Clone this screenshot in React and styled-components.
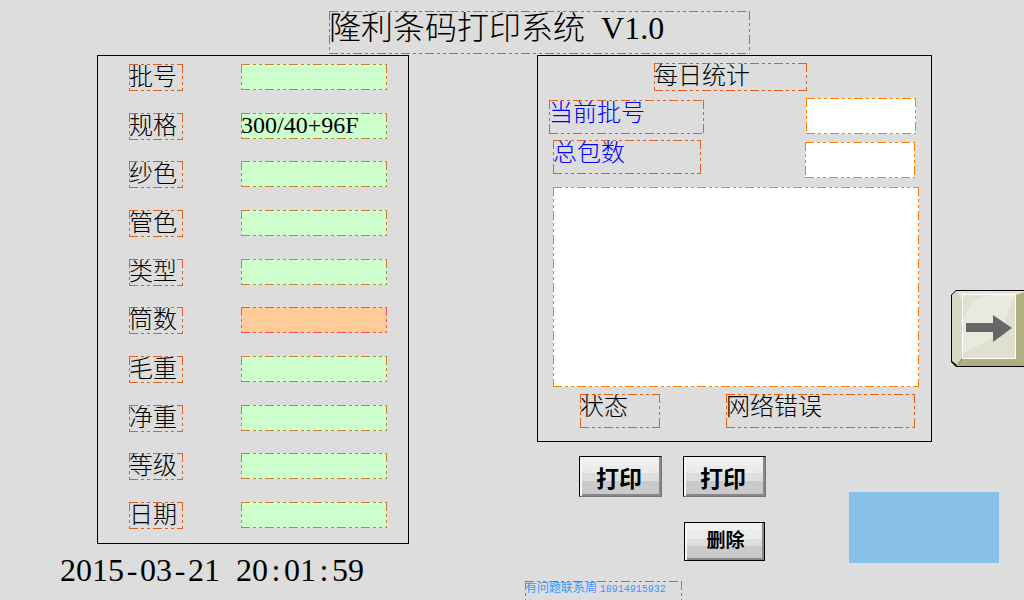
import React from 'react';
import styled, { createGlobalStyle, css } from 'styled-components';

const Global = createGlobalStyle`
  * { box-sizing: border-box; }
  body {
    margin: 0;
    background: #dddddd;
    color: #000;
    font-family: "Liberation Serif", "Noto Sans CJK SC", serif;
    font-size: 24px;
    font-weight: 300;
    line-height: 24px;
  }
`;

const dash = (dir, c) => `linear-gradient(to ${dir}, ${c} 0 9px, transparent 9px 12px, ${c} 12px 15px, transparent 15px 18px, ${c} 18px 21px, transparent 21px 24px)`;

const dashed = css`
  background:
    ${p => dash('right', p.$line || '#e06020')} 0 0 / 24px 1px repeat-x,
    ${p => dash('right', p.$line || '#e06020')} 0 100% / 24px 1px repeat-x,
    ${p => dash('bottom', p.$line || '#e06020')} 0 0 / 1px 24px repeat-y,
    ${p => dash('bottom', p.$line || '#e06020')} 100% 0 / 1px 24px repeat-y,
    ${p => p.$fill || 'transparent'};
`;

const Screen = styled.main`
  display: flex;
  flex-direction: column;
  height: 100vh;
  padding-top: 11px;
  overflow: hidden;
`;

const Title = styled.h1`
  ${dashed}
  width: 421px;
  flex: none;
  height: 43px;
  margin: 0 0 1px 329px;
  padding: 1px 0;
  font-size: 32px;
  font-weight: 300;
  line-height: 32px;
  white-space: nowrap;
`;

const Version = styled.span`
  margin-left: 8px;
`;

const Columns = styled.div`
  display: flex;
  flex: none;
  align-items: flex-start;
`;

const Left = styled.div`
  width: 409px;
  flex: none;
`;

const Form = styled.form`
  display: flex;
  flex-direction: column;
  justify-content: space-between;
  height: 489px;
  margin-left: 97px;
  padding: 8px 21px 14px 31px;
  border: 1px solid #000;
`;

const Row = styled.div`
  display: flex;
  justify-content: space-between;
  align-items: flex-start;
`;

const Label = styled.label`
  ${dashed}
  width: ${p => p.$w || 54}px;
  height: ${p => p.$h || 27}px;
  padding-top: 1px;
  color: ${p => p.$color || '#000'};
  white-space: nowrap;
`;

const Field = styled.input`
  ${dashed}
  width: ${p => p.$w || 146}px;
  height: ${p => p.$h || 26}px;
  padding: 0;
  border: 0;
  border-radius: 0;
  outline: 0;
  color: #000;
  font: inherit;
`;

const Clock = styled.time`
  display: block;
  margin: 10px 0 0 60px;
  font-size: 32px;
  line-height: 32px;
  white-space: nowrap;
`;

const Half = styled.span`
  display: inline-block;
  width: 16px;
  text-align: center;
  white-space: pre;
`;

const Right = styled.div`
  display: flex;
  flex-direction: column;
  width: 395px;
  flex: none;
  margin-left: 128px;
`;

const Stats = styled.section`
  display: flex;
  flex-direction: column;
  height: 387px;
  padding: 7px 12px 0 11px;
  border: 1px solid #000;
`;

const Heading = styled.h2`
  ${dashed}
  width: 153px;
  height: 28px;
  margin: 0 0 7px 105px;
  padding-top: 1px;
  font-size: 24px;
  font-weight: 300;
  line-height: 24px;
`;

const BatchRow = styled(Row)`
  align-items: flex-end;
  padding-right: 3px;
  margin-bottom: 6px;
`;

const TotalRow = styled(Row)`
  height: 38px;
  padding: 0 4px;
  margin-bottom: 9px;

  input { align-self: flex-end; }
`;

const Log = styled.textarea`
  ${dashed}
  display: block;
  width: 366px;
  height: 200px;
  margin: 0 0 7px 4px;
  padding: 2px;
  border: 0;
  outline: 0;
  resize: none;
  font: inherit;
`;

const Status = styled.div`
  display: flex;
  justify-content: space-between;
  padding: 0 4px 0 31px;
`;

const Text = styled.span`
  ${dashed}
  width: ${p => p.$w}px;
  height: 34px;
  padding-top: 1px;
`;

const Actions = styled.div`
  display: grid;
  grid-template-columns: 83px 83px;
  gap: 25px 21px;
  margin: 14px 0 0 42px;
`;

const Button = styled.button`
  height: 41px;
  padding: 0 3px 0 0;
  border: 1px solid #000;
  border-right-color: #777;
  border-bottom-color: #777;
  border-radius: 0;
  box-shadow: inset 2px 0 0 #f6f6f6, inset -2px -2px 0 #888;
  background: linear-gradient(#f1f1f1 0 20%, #ebebeb 20% 42%, #dedede 42% 62%, #cacaca 62%);
  color: #000;
  font: bold 23px/32px "Noto Sans CJK SC", sans-serif;
`;

const SmallButton = styled(Button)`
  grid-column: 2;
  height: 39px;
  margin: 0 1px;
  padding: 0 0 6px 2px;
  border-color: #000;
  font-size: 19px;
  line-height: 28px;
`;

const Side = styled.aside`
  display: flex;
  flex: 1;
  flex-direction: column;
  min-width: 0;
  align-items: flex-end;
  gap: 125px;
  padding-top: 235px;
`;

const Next = styled.button`
  width: 73px;
  height: 77px;
  padding: 0;
  border: 0;
  background: none;
  svg { display: block; }
`;

const Panel = styled.div`
  width: 150px;
  height: 71px;
  flex: none;
  margin-right: 25px;
  background: #87c0e8;
`;

const Contact = styled.footer`
  ${dashed}
  width: 157px;
  height: 24px;
  flex: none;
  margin: -5px 0 0 525px;
  color: #3399ff;
  font: 12px/12px "Noto Sans CJK SC", sans-serif;
  white-space: nowrap;
`;

const Phone = styled.span`
  font: 10px/12px "Liberation Mono", monospace;
`;

const fields = ['批号', '规格', '纱色', '管色', '类型', '筒数', '毛重', '净重', '等级', '日期'];

export default function App() {
  return (
    <Screen>
      <Global />
      <Title>隆利条码打印系统 <Version>V1.0</Version></Title>
      <Columns>
        <Left>
          <Form>
            {fields.map((name, i) => (
              <Row key={name}>
                <Label htmlFor={`f${i}`}>{name}</Label>
                <Field
                  id={`f${i}`}
                  defaultValue={i === 1 ? '300/40+96F' : ''}
                  $fill={i === 5 ? '#ffcc99' : '#ccffcc'}
                  $line={i === 5 ? '#ff4d66' : '#cc8033'}
                />
              </Row>
            ))}
          </Form>
          <Clock>2015<Half>-</Half>03<Half>-</Half>21<Half> </Half>20<Half>:</Half>01<Half>:</Half>59</Clock>
        </Left>
        <Right>
          <Stats>
            <Heading>每日统计</Heading>
            <BatchRow>
              <Label htmlFor="batch" $w={155} $h={34} $color="#0000ff">当前批号</Label>
              <Field id="batch" $w={110} $h={36} $fill="#fff" $line="#ff8000" />
            </BatchRow>
            <TotalRow>
              <Label htmlFor="total" $w={148} $h={34} $color="#0000ff">总包数</Label>
              <Field id="total" $w={110} $h={36} $fill="#fff" $line="#ff8000" />
            </TotalRow>
            <Log aria-label="每日统计" $fill="#fff" $line="#ff8000" />
            <Status>
              <Text $w={80}>状态</Text>
              <Text $w={189}>网络错误</Text>
            </Status>
          </Stats>
          <Actions>
            <Button type="button">打印</Button>
            <Button type="button">打印</Button>
            <SmallButton type="button">删除</SmallButton>
          </Actions>
        </Right>
        <Side>
          <Next type="button" aria-label="下一页">
            <svg width="73" height="77" viewBox="0 0 73 77">
              <path d="M5 0H73V77H5L0 72V5Z" fill="#000" />
              <path d="M5 1H73V14H12V67L6 75L1 71V5Z" fill="#d8d8c4" />
              <path d="M5 1H73V5H11V10Z" fill="#e5e5d6" />
              <path d="M12 68H73V76H6L5 75Z" fill="#adad80" />
              <path d="M65 5L73 2V76L65 68Z" fill="#b0b083" />
              <rect x="11" y="4" width="54" height="65" fill="#fff" />
              <rect x="12" y="5" width="52" height="63" fill="#e0e0d1" />
              <path d="M12 30L20 13L28 8L39 5H63L54 32L40 49L12 63Z" fill="#e9e9df" />
              <path d="M15 33H42V25L61 38L42 52V42H15Z" fill="#666" />
            </svg>
          </Next>
          <Panel />
        </Side>
      </Columns>
      <Contact>有问题联系周 <Phone>18914915932</Phone></Contact>
    </Screen>
  );
}
